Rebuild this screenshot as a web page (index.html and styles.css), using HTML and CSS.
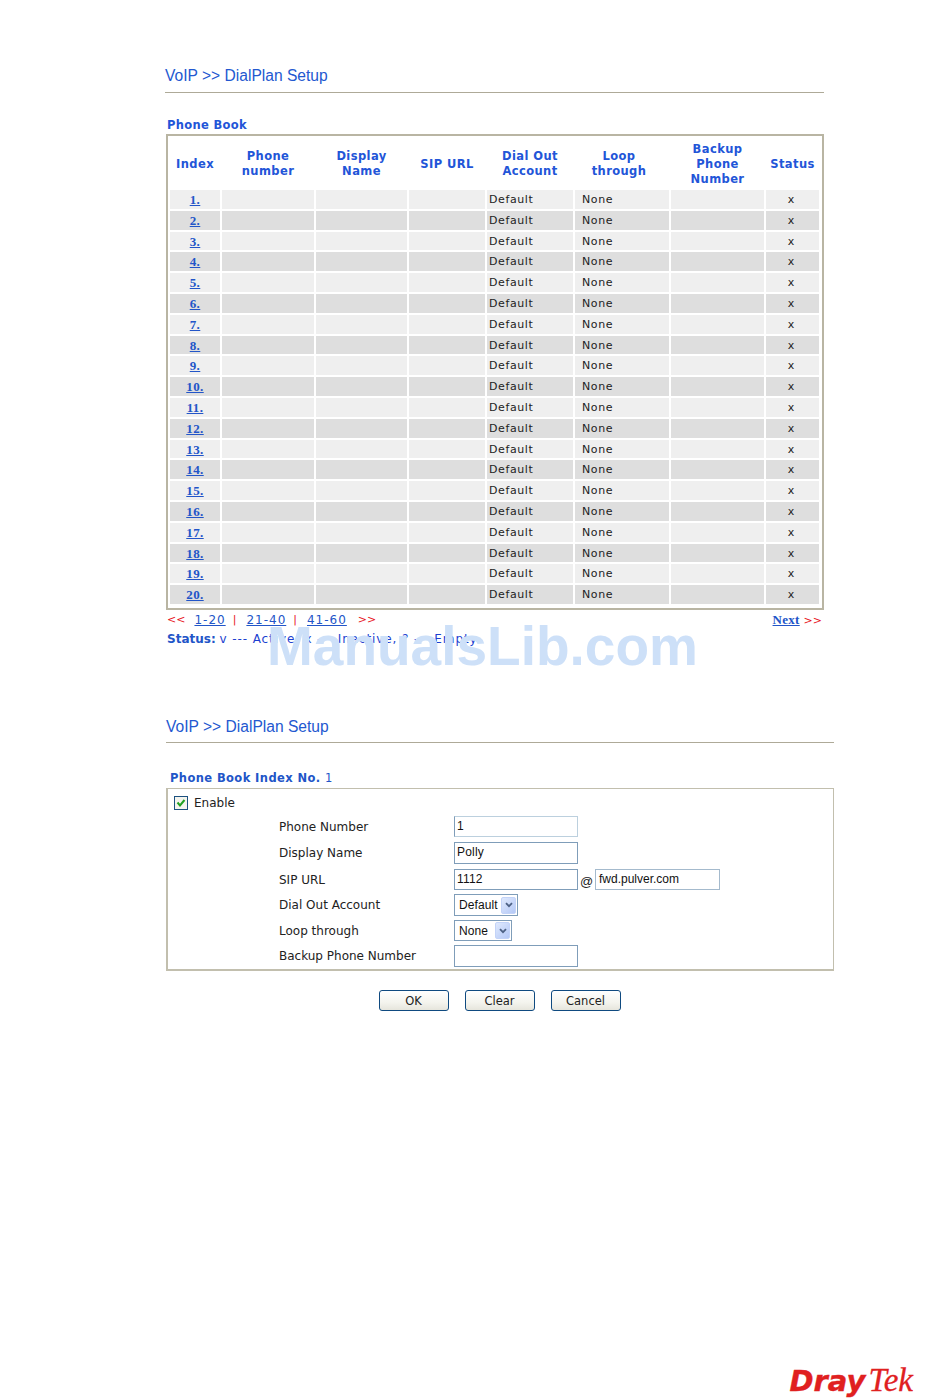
FILE: index.html
```html
<!DOCTYPE html>
<html lang="en">
<head>
<meta charset="utf-8">
<title>VoIP DialPlan Setup</title>
<link rel="stylesheet" href="styles.css">
</head>
<body>
<main class="page">
  <section class="list-section">
    <h1 class="title">VoIP &gt;&gt; DialPlan Setup</h1>
    <h2 class="caption">Phone Book</h2>
    <div class="book">
      <div class="row head">
        <div>Index</div><div>Phone<br>number</div><div>Display<br>Name</div><div>SIP URL</div><div>Dial Out<br>Account</div><div class="loop-head">Loop<br>through</div><div>Backup<br>Phone<br>Number</div><div>Status</div>
      </div>
      <div class="rows">
        <div class="row odd"><a href="#">1.</a><div></div><div></div><div></div><div class="txt">Default</div><div class="txt loop">None</div><div></div><div class="mark">x</div></div>
        <div class="row even"><a href="#">2.</a><div></div><div></div><div></div><div class="txt">Default</div><div class="txt loop">None</div><div></div><div class="mark">x</div></div>
        <div class="row odd"><a href="#">3.</a><div></div><div></div><div></div><div class="txt">Default</div><div class="txt loop">None</div><div></div><div class="mark">x</div></div>
        <div class="row even"><a href="#">4.</a><div></div><div></div><div></div><div class="txt">Default</div><div class="txt loop">None</div><div></div><div class="mark">x</div></div>
        <div class="row odd"><a href="#">5.</a><div></div><div></div><div></div><div class="txt">Default</div><div class="txt loop">None</div><div></div><div class="mark">x</div></div>
        <div class="row even"><a href="#">6.</a><div></div><div></div><div></div><div class="txt">Default</div><div class="txt loop">None</div><div></div><div class="mark">x</div></div>
        <div class="row odd"><a href="#">7.</a><div></div><div></div><div></div><div class="txt">Default</div><div class="txt loop">None</div><div></div><div class="mark">x</div></div>
        <div class="row even"><a href="#">8.</a><div></div><div></div><div></div><div class="txt">Default</div><div class="txt loop">None</div><div></div><div class="mark">x</div></div>
        <div class="row odd"><a href="#">9.</a><div></div><div></div><div></div><div class="txt">Default</div><div class="txt loop">None</div><div></div><div class="mark">x</div></div>
        <div class="row even"><a href="#">10.</a><div></div><div></div><div></div><div class="txt">Default</div><div class="txt loop">None</div><div></div><div class="mark">x</div></div>
        <div class="row odd"><a href="#">11.</a><div></div><div></div><div></div><div class="txt">Default</div><div class="txt loop">None</div><div></div><div class="mark">x</div></div>
        <div class="row even"><a href="#">12.</a><div></div><div></div><div></div><div class="txt">Default</div><div class="txt loop">None</div><div></div><div class="mark">x</div></div>
        <div class="row odd"><a href="#">13.</a><div></div><div></div><div></div><div class="txt">Default</div><div class="txt loop">None</div><div></div><div class="mark">x</div></div>
        <div class="row even"><a href="#">14.</a><div></div><div></div><div></div><div class="txt">Default</div><div class="txt loop">None</div><div></div><div class="mark">x</div></div>
        <div class="row odd"><a href="#">15.</a><div></div><div></div><div></div><div class="txt">Default</div><div class="txt loop">None</div><div></div><div class="mark">x</div></div>
        <div class="row even"><a href="#">16.</a><div></div><div></div><div></div><div class="txt">Default</div><div class="txt loop">None</div><div></div><div class="mark">x</div></div>
        <div class="row odd"><a href="#">17.</a><div></div><div></div><div></div><div class="txt">Default</div><div class="txt loop">None</div><div></div><div class="mark">x</div></div>
        <div class="row even"><a href="#">18.</a><div></div><div></div><div></div><div class="txt">Default</div><div class="txt loop">None</div><div></div><div class="mark">x</div></div>
        <div class="row odd"><a href="#">19.</a><div></div><div></div><div></div><div class="txt">Default</div><div class="txt loop">None</div><div></div><div class="mark">x</div></div>
        <div class="row even"><a href="#">20.</a><div></div><div></div><div></div><div class="txt">Default</div><div class="txt loop">None</div><div></div><div class="mark">x</div></div>
      </div>
    </div>
    <div class="pager">
      <div class="pages"><span class="red">&lt;&lt;</span><a href="#">1-20</a><span class="red">|</span><a href="#">21-40</a><span class="red">|</span><a href="#">41-60</a><span class="red">&gt;&gt;</span></div>
      <div class="next"><a href="#">Next</a> <span class="red">&gt;&gt;</span></div>
    </div>
    <p class="status"><b>Status:</b> <span class="legend">v --- Active, x --- Inactive, ? --- Empty</span></p>
    <div class="watermark">ManualsLib.com</div>
  </section>

  <section class="edit-section">
    <h1 class="title">VoIP &gt;&gt; DialPlan Setup</h1>
    <h2 class="caption index-caption">Phone Book Index No. <span class="num">1</span></h2>
    <div class="form-box">
      <label class="enable">
        <svg class="check" width="14" height="14" viewBox="0 0 14 14"><rect x=".5" y=".5" width="13" height="13" fill="#f4f4ee" stroke="#1c5180"/><path d="M3.5 6.5 6 9.5 10.5 4" fill="none" stroke="#21a121" stroke-width="2"/></svg>
        Enable
      </label>
      <div class="field f1"><span>Phone Number</span><div class="inp pale">1</div></div>
      <div class="field f2"><span>Display Name</span><div class="inp">Polly</div></div>
      <div class="field f3"><span>SIP URL</span><div class="inp">1112</div><span class="at">@</span><div class="inp domain">fwd.pulver.com</div></div>
      <div class="field f4"><span>Dial Out Account</span><div class="sel wide">Default<i class="arrow"><svg width="8" height="6" viewBox="0 0 8 6"><path d="M1 1.2 4 4.2 7 1.2" fill="none" stroke="#4d6185" stroke-width="1.8"/></svg></i></div></div>
      <div class="field f5"><span>Loop through</span><div class="sel">None<i class="arrow"><svg width="8" height="6" viewBox="0 0 8 6"><path d="M1 1.2 4 4.2 7 1.2" fill="none" stroke="#4d6185" stroke-width="1.8"/></svg></i></div></div>
      <div class="field f6"><span>Backup Phone Number</span><div class="inp"></div></div>
    </div>
    <div class="actions">
      <button type="button">OK</button>
      <button type="button">Clear</button>
      <button type="button">Cancel</button>
    </div>
  </section>

  <footer class="brand"><span class="dray">Dray</span><span class="tek">Tek</span></footer>
</main>
</body>
</html>
```
FILE: styles.css
```css
* { box-sizing: border-box; }
html, body { margin: 0; padding: 0; background: #fff; }
body { font-family: "DejaVu Sans", sans-serif; font-size: 11px; color: #222; }
.page { height: 1398px; display: flex; flex-direction: column; overflow: hidden; }

.title {
  margin: 0; font: 400 15.6px/18px "Liberation Sans", sans-serif; color: #2358d0;
  padding-bottom: 7px; border-bottom: 1px solid #aeaa98;
}
.caption { margin: 0; font: 700 11.5px/14px "DejaVu Sans", sans-serif; color: #2255d8; letter-spacing: .33px; }

.list-section { position: relative; margin: 67px 0 0 165px; width: 659px; }
.list-section .caption { margin: 25px 0 0 2px; }
.book { margin: 2px 0 0 1px; width: 658px; height: 476px; border: 2px solid #b9b5a3; padding: 0 3px 0 2px; }
.row { display: grid; grid-template-columns: 50px 92px 91px 76px 86px 94px 93px 53px; column-gap: 2px; }
.head {
  height: 54px; padding-top: 2px; align-items: center; text-align: center;
  font: 700 11.5px/15px "DejaVu Sans", sans-serif; letter-spacing: .4px; color: #2255d8;
}
.loop-head { padding-right: 6px; }
.rows { height: 414px; display: flex; flex-direction: column; gap: 2px; }
.rows .row { flex: 1 1 0; min-height: 0; grid-template-rows: minmax(0, 1fr); }
.odd > * { background: #efefef; }
.even > * { background: #dedede; }
.rows a {
  text-align: center; color: #2255c8; font: 700 13px/19px "Liberation Serif", serif; letter-spacing: .4px;
}
.txt { padding-left: 2px; font-size: 11px; line-height: 20px; letter-spacing: .6px; color: #222; }
.loop { padding-left: 7px; }
.mark { text-align: center; line-height: 20px; padding-right: 3px; }

.pager { display: flex; justify-content: space-between; margin: 3px 2px 0; font-size: 12px; line-height: 14px; }
.pages { display: flex; }
.pages a {
  margin: 0 7px 0 10px; color: #2255c8; font: 400 12px/14px "DejaVu Sans", sans-serif; letter-spacing: 1px;
}
.pages a:first-of-type { margin-left: 9px; }
.pages a:last-of-type { margin-right: 11px; }
.next a { color: #2255c8; font: 700 13px/14px "Liberation Serif", serif; letter-spacing: .3px; }
.red { color: #e8141c; font-size: 11px; }
.status { margin: 3px 0 0 2px; font-size: 12px; line-height: 16px; white-space: nowrap; }
.status b { color: #2255c8; }
.legend { color: #1c3fd0; letter-spacing: .9px; }
.watermark {
  position: absolute; left: 102px; top: 549px;
  font: 700 55px/60px "Liberation Sans", sans-serif; color: #cde0f8; white-space: nowrap;
}

.edit-section { margin: 71px 0 0 166px; width: 668px; }
.edit-section .title { padding-bottom: 6px; }
.index-caption { margin: 28px 0 0 4px; font-size: 11.5px; letter-spacing: .4px; color: #2255c8; }
.num { font-weight: 400; }
.form-box { margin-top: 3px; height: 183px; border: 2px solid #c2bfae; border-width: 1px 1px 2px 2px; }
.enable { display: flex; align-items: center; gap: 6px; padding: 7px 0 0 6px; font-size: 12px; line-height: 14px; color: #222; }
.field { display: flex; align-items: center; padding-left: 111px; font-size: 12px; }
.field > span:first-child { width: 175px; flex: none; }
.f1 { margin-top: 6px; height: 21px; }
.f2 { margin-top: 5px; height: 22px; }
.f3 { margin-top: 5px; height: 21px; }
.f4 { margin-top: 4px; height: 22px; }
.f5 { margin-top: 4px; height: 21px; }
.f6 { margin-top: 4px; height: 22px; }
.inp {
  width: 124px; height: 100%; border: 1px solid #7f9db9; background: #fff; padding-left: 2px;
  font: 12px/19px "Liberation Sans", sans-serif; letter-spacing: .2px; color: #111;
}
.pale { border-color: #bcd0de; border-left-color: #7f9db9; }
.at { width: 17px; padding-top: 3px; text-align: center; font: 13px "Liberation Sans", sans-serif; }
.domain { width: 125px; font-size: 12px; letter-spacing: 0; padding-left: 3px; border-color: #a4bacd; }
.sel {
  width: 58px; height: 100%; border: 1px solid #7f9db9; display: flex; align-items: center; justify-content: space-between;
  padding: 0 1px 0 4px; font: 12px "Liberation Sans", sans-serif; letter-spacing: .1px; color: #111;
}
.sel.wide { width: 64px; }
.arrow {
  width: 15px; height: 17px; display: flex; align-items: center; justify-content: center;
  background: linear-gradient(135deg, #dfe9fd, #b4c8f6); border: 1px solid #c3d3f8; border-radius: 2px;
}

.actions { display: flex; justify-content: center; gap: 16px; margin: 19px 0 0 -1px; }
.actions button {
  width: 70px; height: 21px; padding: 0; border: 1px solid #0f4a80; border-radius: 3px;
  background: linear-gradient(#fff, #f4f4ee 60%, #e6e5dc); font: 11.5px "DejaVu Sans", sans-serif; color: #222;
}

.brand { margin: auto 37px 1px auto; height: 34px; line-height: 34px; white-space: nowrap; color: #e0201f; }
.dray { font: italic 700 29px/34px "DejaVu Sans", sans-serif; -webkit-text-stroke: .4px #e0201f; }
.tek { font: italic 400 33px/34px "Liberation Serif", serif; margin-left: 3px; -webkit-text-stroke: .3px #e0201f; }
```
